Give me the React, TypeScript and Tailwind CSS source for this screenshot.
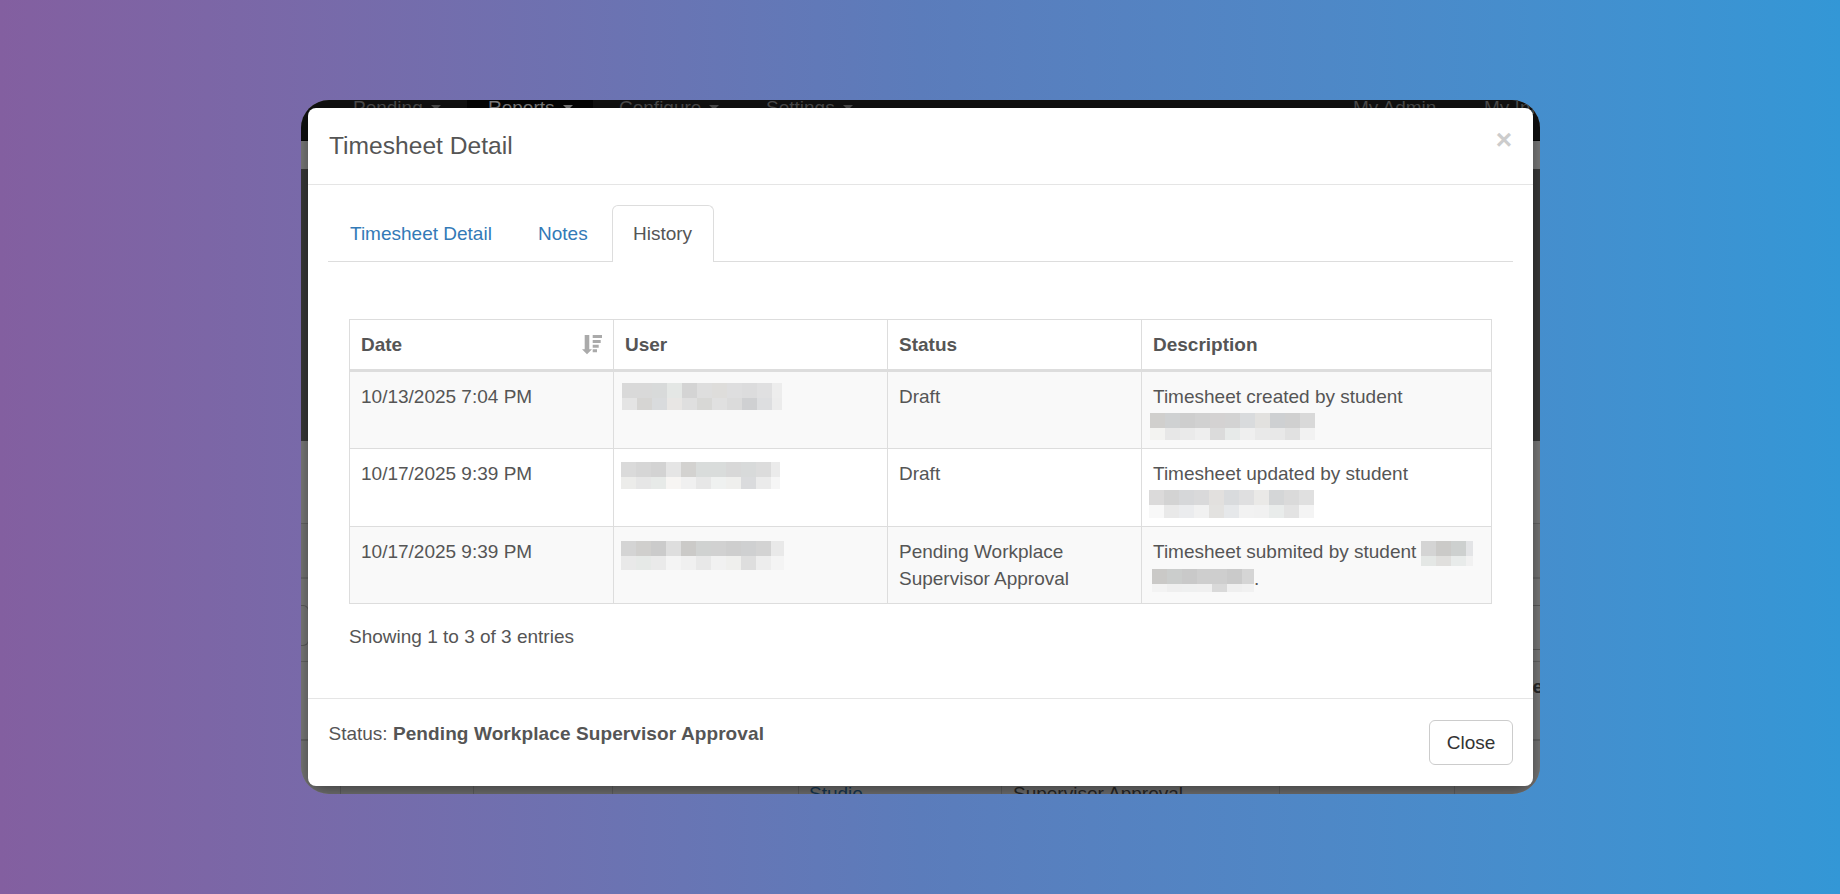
import type { ReactNode } from 'react';

interface MosaicProps {
    className: string;
    top: string[];
    bottom: string[];
}

interface HistoryEntry {
    id: number;
    date: string;
    user: ReactNode;
    status: string;
    description: ReactNode;
}

// Two rows of grey blocks that hide a student's name
function Mosaic({ className, top, bottom }: MosaicProps) {
    return (
        <span className={`absolute block overflow-hidden ${className}`}>
            {[top, bottom].map((row, i) => (
                <span key={i} className="flex h-[15px] w-max">
                    {row.map((color, j) => (
                        <span key={j} className="block h-[15px] w-[15px]" style={{ backgroundColor: color }} />
                    ))}
                </span>
            ))}
        </span>
    );
}

const entries: HistoryEntry[] = [
    {
        id: 1,
        date: '10/13/2025 7:04 PM',
        user: (
            <Mosaic
                className="top-[11px] left-[8px] h-[27px] w-[160px]"
                top={['#d9d9d9', '#d9d9d9', '#d8dada', '#e4e7e5', '#d4d4d4', '#dedede', '#dedddb', '#dededf', '#dcdcdd', '#e0e0e1', '#ededed']}
                bottom={['#e4e4e4', '#d6d5d3', '#d9dbdd', '#e8e6e4', '#dfdfdf', '#d8d8d6', '#e0e0e0', '#dbdbdb', '#cfd0d2', '#dddee0', '#ececec']}
            />
        ),
        status: 'Draft',
        description: (
            <>
                Timesheet created by student
                <Mosaic
                    className="top-[41px] left-[8px] h-[27px] w-[165px]"
                    top={['#d0cfcd', '#cfd1d2', '#cecece', '#d1d1d1', '#d4d2d2', '#d3d3d3', '#d9dbdd', '#e2e1df', '#ced0d2', '#d0d0d0', '#d9d9d9']}
                    bottom={['#f3f3f1', '#e7e7e7', '#eaeaea', '#eeeeee', '#dbdbdb', '#e7eae9', '#efefef', '#e9e9e9', '#e8e8e8', '#e1e1e1', '#f2f2f2']}
                />
            </>
        ),
    },
    {
        id: 2,
        date: '10/17/2025 9:39 PM',
        user: (
            <Mosaic
                className="top-[13px] left-[7px] h-[27px] w-[159px]"
                top={['#dadada', '#d6d6d6', '#d3d3d3', '#e5e5e5', '#d3d2d0', '#d9dcdb', '#d9dcdb', '#d8d8d8', '#d8dada', '#dcdcdc', '#ebebeb']}
                bottom={['#ececea', '#e6e6e6', '#e7eae8', '#f7f5f3', '#f0f0f0', '#e7e7e7', '#eff1f0', '#efefed', '#dadbdd', '#ebebeb', '#f6f6f6']}
            />
        ),
        status: 'Draft',
        description: (
            <>
                Timesheet updated by student
                <Mosaic
                    className="top-[41px] left-[7px] h-[28px] w-[165px]"
                    top={['#dbdada', '#d3d3d3', '#d6d7d9', '#d9d9da', '#e2e0de', '#d9dbdd', '#dfdfe0', '#eae9e7', '#d4d6d7', '#dadada', '#e0e0e0']}
                    bottom={['#f8f8f8', '#e9e9e9', '#ebecee', '#f1f1f1', '#e3e2e0', '#e6e8ea', '#f2f2f2', '#f1f1f1', '#e9eceb', '#e3e3e3', '#f4f4f4']}
                />
            </>
        ),
    },
    {
        id: 3,
        date: '10/17/2025 9:39 PM',
        user: (
            <Mosaic
                className="top-[14px] left-[7px] h-[29px] w-[163px]"
                top={['#d4d4d4', '#d0cfcd', '#cbcbcb', '#dedede', '#cbcac8', '#d0d2d1', '#d1d1d1', '#cecece', '#cfd0d1', '#d3d3d3', '#e9e9e9']}
                bottom={['#e9e9e9', '#e6e9e7', '#eaeaea', '#f4f4f4', '#f0f0f0', '#e8e8e8', '#f1f1f1', '#efefed', '#dedede', '#ededed', '#f4f4f4']}
            />
        ),
        status: 'Pending Workplace Supervisor Approval',
        description: (
            <>
                Timesheet submited by student
                <span className="block pl-[101px]">.</span>
                <Mosaic
                    className="top-[14px] left-[279px] h-[25px] w-[52px]"
                    top={['#d4d4d4', '#cbcac8', '#cdd0cf', '#e3e4e6']}
                    bottom={['#e4e7e5', '#e0dfdd', '#e8ebea', '#f1f1f1']}
                />
                <Mosaic
                    className="top-[42px] left-[10px] h-[23px] w-[102px]"
                    top={['#cac9c7', '#cbcdcc', '#c9c9c9', '#cecece', '#cecece', '#cacaca', '#d5d5d5']}
                    bottom={['#f3f3f3', '#efefef', '#eff0f0', '#f0f0f0', '#d9d9d9', '#efefef', '#f1f1f1']}
                />
            </>
        ),
    },
];

function SortIcon() {
    return (
        <svg className="h-[20px] w-[20px] fill-[#aaa]" viewBox="0 0 20 20">
            <path d="M2.700 0h4.600v14.300h2.700L5 19.300 0 14.300h2.700zM10.700 0H20v3h-9.300zM10.700 5h8v3h-8zM10.700 9.700h6v3h-6zM10.700 14.300h4.300v3h-4.300z" />
        </svg>
    );
}

function NavItem({ label, className }: { label: string; className: string }) {
    return (
        <span className={`absolute -top-[6px] flex items-center gap-[8px] leading-[27px] ${className}`}>
            {label}
            <span className="border-x-[5.500px] border-t-[5px] border-x-transparent border-t-current" />
        </span>
    );
}

// The dimmed page that shows round the dialog
function PageBehind() {
    return (
        <div className="absolute inset-0 flex flex-col bg-[#808080]">
            <div className="relative h-[41px] shrink-0 border-b border-[#040404] bg-[#111] text-[#4e4e4e]">
                <div className="absolute left-[166px] h-[40px] w-[126px] bg-[#040404]" />
                <NavItem label="Pending" className="left-[52px]" />
                <NavItem label="Reports" className="left-[187px] text-[#808080]" />
                <NavItem label="Configure" className="left-[318px]" />
                <NavItem label="Settings" className="left-[465px]" />
                <span className="absolute -top-[6px] left-[1052px] leading-[27px]">My Admin</span>
                <span className="absolute -top-[6px] left-[1183px] leading-[27px] whitespace-nowrap">My Info</span>
            </div>
            <div className="h-[28px] shrink-0" />
            <div className="h-[272px] shrink-0 bg-[#3c3c3c]" />
            <div className="h-[83px] shrink-0 border-b border-[#6a6a6a]" />
            <div className="h-[55px] shrink-0 border-b-2 border-[#6e6e6e] bg-[#7c7c7c]" />
            <div className="h-[26px] shrink-0" />
            <div className="flex h-[45px] shrink-0 justify-between">
                <div className="h-[41px] w-[8px] rounded-r-[6px] border border-l-0 border-[#606060]" />
                <div className="w-[8px] border-y border-[#606060]" />
            </div>
            <div className="h-[12px] shrink-0 border-b border-[#6a6a6a]" />
            <div className="flex h-[79px] shrink-0 items-start justify-end overflow-hidden border-b-2 border-[#6a6a6a]">
                <span className="relative left-[3px] pt-[11px] leading-[27px] font-bold text-[#2b2b2b]">e</span>
            </div>
            <div className="relative flex-1 bg-[#7c7c7c] text-[#2b2b2b]">
                <div className="flex h-full divide-x divide-[#6a6a6a]">
                    <div className="w-[40px]" />
                    <div className="w-[133px]" />
                    <div className="w-[139px]" />
                    <div className="w-[186px]" />
                    <div className="w-[203px]" />
                    <div className="w-[278px]" />
                    <div className="w-[175px]" />
                    <div className="flex-1" />
                </div>
                <span className="absolute top-[39px] left-[508px] leading-[27px] text-[#193d5b]">Studio</span>
                <span className="absolute top-[39px] left-[712px] leading-[27px]">Supervisor Approval</span>
            </div>
        </div>
    );
}

export default function App() {
    return (
        <div className="h-[894px] w-[1840px] overflow-hidden bg-linear-to-r from-[#835fa0] via-[#5b7cbb] to-[#3397d6] pt-[100px] pl-[301px] font-['Liberation_Sans',Arial,sans-serif] text-[19px] leading-[27px] text-[#555]">
            <div className="relative h-[694px] w-[1239px] overflow-hidden rounded-[28px] pt-[8px] pl-[7px]">
                <PageBehind />
                <div className="relative h-[678px] w-[1225px] rounded-[8px] bg-white shadow-[0_6px_20px_rgba(0,0,0,0.5)]">
                    <div className="flex h-[77px] items-start justify-between border-b border-[#e5e5e5] pr-[21px] pl-[21px]">
                        <h4 className="pt-[21px] text-[24.6px] leading-[34px]">Timesheet Detail</h4>
                        <button className="pt-[18px] text-[28px] leading-[28px] font-bold text-[#ccc]">×</button>
                    </div>

                    <div className="h-[514px] border-b border-[#e5e5e5] px-[20px] pt-[20px]">
                        <div className="flex h-[57px] border-b border-[#ddd]">
                            <a className="w-[188px] pt-[15px] pl-[22px] text-[#337ab7]">Timesheet Detail</a>
                            <a className="w-[96px] pt-[15px] pl-[22px] text-[#337ab7]">Notes</a>
                            <a className="h-[57px] w-[102px] rounded-t-[6px] border border-b-0 border-[#ddd] bg-white pt-[14px] pl-[20px]">
                                History
                            </a>
                        </div>

                        <table className="mt-[57px] ml-[21px] w-[1143px] table-fixed border-separate border-spacing-0 border-t border-l border-[#ddd]">
                            <colgroup>
                                <col className="w-[264px]" />
                                <col className="w-[274px]" />
                                <col className="w-[254px]" />
                                <col className="w-[350px]" />
                            </colgroup>
                            <thead>
                                <tr className="text-left">
                                    <th className="border-r border-b-[3px] border-[#ddd] px-[11px] py-[11px]">
                                        <div className="flex items-center justify-between">
                                            Date
                                            <SortIcon />
                                        </div>
                                    </th>
                                    <th className="border-r border-b-[3px] border-[#ddd] p-[11px]">User</th>
                                    <th className="border-r border-b-[3px] border-[#ddd] p-[11px]">Status</th>
                                    <th className="border-r border-b-[3px] border-[#ddd] p-[11px]">Description</th>
                                </tr>
                            </thead>
                            <tbody>
                                {entries.map((entry) => (
                                    <tr key={entry.id} className="h-[77px] align-top odd:bg-[#f9f9f9] even:h-[78px]">
                                        <td className="border-r border-b border-[#ddd] p-[11px]">{entry.date}</td>
                                        <td className="relative border-r border-b border-[#ddd]">{entry.user}</td>
                                        <td className="border-r border-b border-[#ddd] p-[11px]">{entry.status}</td>
                                        <td className="relative border-r border-b border-[#ddd] p-[11px]">{entry.description}</td>
                                    </tr>
                                ))}
                            </tbody>
                        </table>
                        <p className="pt-[19px] pl-[21px]">Showing 1 to 3 of 3 entries</p>
                    </div>

                    <div className="flex items-start justify-between pt-[21px] pr-[20px] pl-[20.500px]">
                        <p>
                            Status: <strong className="tracking-[0.1px]">Pending Workplace Supervisor Approval</strong>
                        </p>
                        <button className="h-[45px] w-[84px] rounded-[6px] border border-[#ccc] bg-white text-[#333]">
                            Close
                        </button>
                    </div>
                </div>
            </div>
        </div>
    );
}
